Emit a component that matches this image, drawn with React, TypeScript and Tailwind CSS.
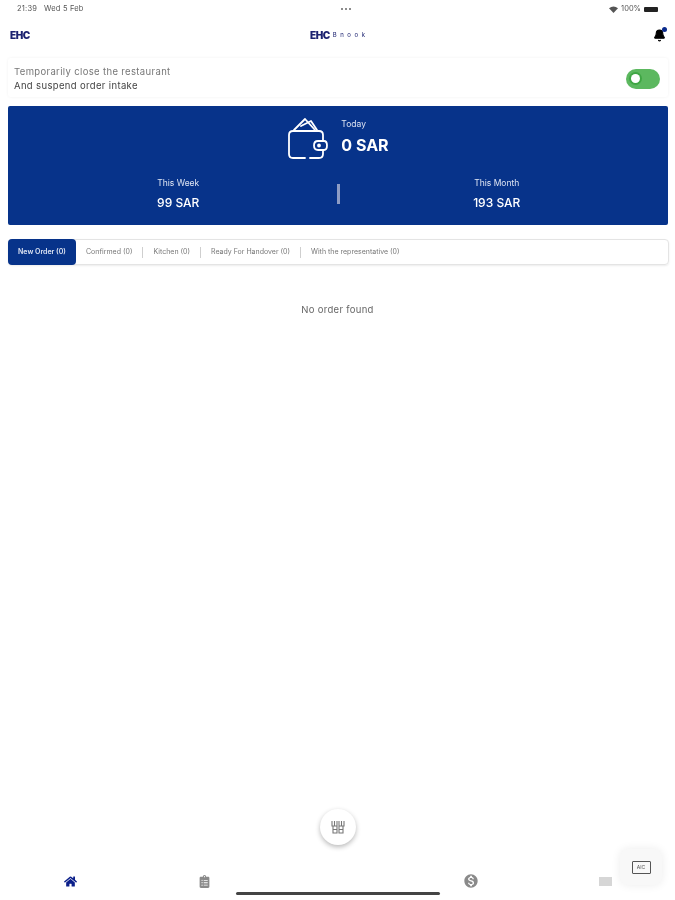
import { Bell } from "lucide-react"
import { FaHome, FaClipboardList } from "react-icons/fa"
import { MdMonetizationOn } from "react-icons/md"

const tabs = ["Confirmed (0)", "Kitchen (0)", "Ready For Handover (0)", "With the representative (0)"]

function Logo() {
  return (
    <span className="text-[10px] font-black leading-none tracking-[-0.5px] text-[#1c2270]">EHC</span>
  )
}

function Wallet() {
  return (
    <svg width="40" height="42" viewBox="0 0 40 42" fill="none" stroke="white" strokeWidth="1.8" strokeLinecap="round" strokeLinejoin="round">
      <path d="M6 13 L17 2 L27 13" />
      <path d="M13 9 L23 4 L29 13" />
      <path d="M35 24 V18 Q35 14 31 14 H5 Q1 14 1 18 V37 Q1 41 5 41 H17" />
      <path d="M22 41 H31 Q35 41 35 37 V33" />
      <path d="M30 24 H36 Q39 24 39 28.5 Q39 33 36 33 H30 Q26 33 26 28.5 Q26 24 30 24 Z" />
      <circle cx="31" cy="28.5" r="1" fill="white" />
    </svg>
  )
}

function StatusBar() {
  return (
    <div className="relative flex h-[15px] items-center justify-between pl-[17px] pr-[17px] pt-[3px] text-[7.5px] text-[#555]">
      <span className="tracking-[0.2px]">21:39&nbsp;&nbsp; Wed 5 Feb</span>
      <span className="flex gap-[2px]">
        <span className="h-[2px] w-[2px] rounded-full bg-[#666]" />
        <span className="h-[2px] w-[2px] rounded-full bg-[#666]" />
        <span className="h-[2px] w-[2px] rounded-full bg-[#666]" />
      </span>
      <span className="flex items-center gap-[2px]">
        <svg width="9" height="7" viewBox="0 0 9 7" fill="#555">
          <path d="M0 2.2 Q4.5 -1.4 9 2.2 L4.5 7 Z" />
        </svg>
        <span className="ml-[1px]">100%</span>
        <span className="ml-[1px] h-[5px] w-[14px] rounded-[1px] bg-[#222]" />
      </span>
    </div>
  )
}

export default function App() {
  return (
    <div className="relative flex h-[900px] w-[675px] flex-col overflow-hidden bg-white blur-[0.4px] font-['Inter',sans-serif]">
      <StatusBar />

      <div className="flex h-[38px] items-center justify-between pl-[10px] pr-[9px] pt-[2px]">
        <Logo />
        <div className="-ml-[4px] flex items-center gap-[3px]">
          <Logo />
          <span className="text-[6px] leading-none tracking-[3.6px] text-[#1c2270]">Bnook</span>
        </div>
        <div className="relative">
          <Bell size={13} className="fill-black text-black" />
          <span className="absolute -right-[1px] -top-[2px] h-[5px] w-[5px] rounded-full bg-[#0a2a8c]" />
        </div>
      </div>

      <div className="mx-[8px] mt-[5px] flex h-[39px] w-[660px] items-center justify-between rounded-[3px] pl-[6px] pr-[8px] pt-[2px] shadow-[0_0_3px_rgba(0,0,0,0.06)]">
        <div className="text-[9.5px] leading-[13.5px] tracking-[0.35px]">
          <div className="text-[#777]">Temporarily close the restaurant</div>
          <div className="text-[#444]">And suspend order intake</div>
        </div>
        <div className="flex h-[20px] w-[34px] items-center rounded-full bg-[#5cb85f] pl-[5px]">
          <span className="h-[9px] w-[9px] rounded-full bg-white ring-2 ring-[#3fa644]" />
        </div>
      </div>

      <div className="mx-[8px] mt-[9px] flex h-[119px] w-[660px] flex-col rounded-[2px] bg-[#07338a] text-white">
        <div className="flex justify-center pl-[1px] pt-[11px]">
          <div className="flex items-start gap-[13px]">
            <Wallet />
            <div className="pt-[2px]">
              <div className="text-[8.5px] leading-[10px] text-[#dfe5f3]">Today</div>
              <div className="mt-[7px] text-[16px] font-bold leading-[18px]">0 SAR</div>
            </div>
          </div>
        </div>
        <div className="grid grid-cols-[1fr_3px_1fr] items-center pt-[19px]">
          <div className="flex flex-col items-center pl-[12px]">
            <div className="text-[8.5px] leading-[10px] text-[#dfe5f3]">This Week</div>
            <div className="mt-[8px] text-[12px] font-medium leading-[14px]">99 SAR</div>
          </div>
          <div className="h-[20px] w-[3px] bg-[#8d9cc4]" />
          <div className="flex flex-col items-center pr-[14px]">
            <div className="text-[8.5px] leading-[10px] text-[#dfe5f3]">This Month</div>
            <div className="mt-[8px] text-[12px] font-medium leading-[14px]">193 SAR</div>
          </div>
        </div>
      </div>

      <div className="ml-[8px] mt-[14px] flex h-[26px] w-[661px] items-center rounded-[4px] border border-[#e4e4e4] shadow-[0_1px_2px_rgba(0,0,0,0.08)]">
        <div className="-ml-px flex h-[26px] w-[68px] items-center justify-center rounded-[4px] bg-[#07338a] text-[7px] font-semibold text-[#dfe5f3]">
          New Order (0)
        </div>
        {tabs.map((tab, i) => (
          <div key={tab} className="flex items-center">
            <span className="pl-[10px] pr-[10px] text-[7px] text-[#777]">{tab}</span>
            {i < tabs.length - 1 && <span className="h-[11px] w-px bg-[#cfcfcf]" />}
          </div>
        ))}
      </div>

      <div className="mt-[39px] text-center text-[9.5px] leading-[12px] tracking-[0.3px] text-[#666]">No order found</div>

      <div className="flex-1" />

      <div className="flex justify-center">
        <div className="flex h-[36px] w-[36px] items-center justify-center rounded-full bg-white shadow-[0_2px_5px_rgba(0,0,0,0.28)]">
          <svg width="14" height="14" viewBox="0 0 14 14" fill="none" stroke="#777" strokeWidth="1.1">
            <path d="M1 1 V6 H6 V1 M3.5 1 V6 M8 1 V6 H13 V1 M10.5 1 V6 M2 6 V13 H6 V6 M8 6 V13 H12 V6 M2 9.5 H6 M8 9.5 H12" />
          </svg>
        </div>
      </div>

      <div className="mb-[11px] mt-[28px] flex items-center justify-between pl-[64px] pr-[63px]">
        <FaHome size={13} className="text-[#0b1f8a]" />
        <FaClipboardList size={13} className="text-[#8a8a8a]" />
        <div className="w-[11px]" />
        <MdMonetizationOn size={16} className="text-[#8a8a8a]" />
        <div className="h-[9px] w-[13px] bg-[#d6d6d6]" />
      </div>

      <div className="absolute bottom-[5px] left-[236px] h-[3px] w-[204px] rounded-full bg-[#444]" />

      <div className="absolute left-[620px] top-[849px] flex h-[36px] w-[42px] items-center justify-center rounded-[8px] bg-[#f8f8f8] shadow-[0_0_10px_rgba(0,0,0,0.08)]">
        <div className="flex h-[13px] w-[19px] items-center justify-center rounded-[1px] border border-[#555] text-[5px] leading-none text-[#555]">
          AIC
        </div>
      </div>
    </div>
  )
}
